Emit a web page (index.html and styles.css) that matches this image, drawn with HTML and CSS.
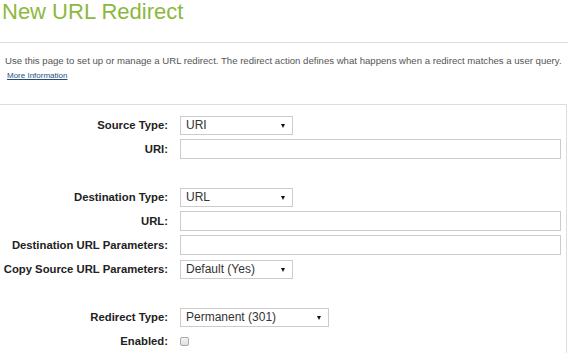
FILE: index.html
```html
<!DOCTYPE html>
<html lang="en">
<head>
<meta charset="utf-8">
<title>New URL Redirect</title>
<link rel="stylesheet" href="styles.css">
</head>
<body>
<h1 class="page-title">New URL Redirect</h1>
<hr class="rule">
<div class="intro">
  <p class="intro-text">Use this page to set up or manage a URL redirect. The redirect action defines what happens when a redirect matches a user query.</p>
  <a class="more-link" href="#">More Information</a>
</div>
<div class="form-box">
  <div class="form-grid">
    <label class="lbl">Source Type:</label>
    <div class="field"><span class="sel sel-short"><select><option>URI</option></select></span></div>

    <label class="lbl">URI:</label>
    <div class="field"><input class="txt" type="text"></div>

    <div class="spacer"></div>

    <label class="lbl">Destination Type:</label>
    <div class="field"><span class="sel sel-short"><select><option>URL</option></select></span></div>

    <label class="lbl">URL:</label>
    <div class="field"><input class="txt" type="text"></div>

    <label class="lbl">Destination URL Parameters:</label>
    <div class="field"><input class="txt" type="text"></div>

    <label class="lbl">Copy Source URL Parameters:</label>
    <div class="field"><span class="sel sel-short"><select><option>Default (Yes)</option></select></span></div>

    <div class="spacer"></div>

    <label class="lbl">Redirect Type:</label>
    <div class="field"><span class="sel sel-long"><select><option>Permanent (301)</option></select></span></div>

    <label class="lbl">Enabled:</label>
    <div class="field"><input class="chk" type="checkbox"></div>
  </div>
</div>
</body>
</html>
```

FILE: styles.css
```css
html, body {
  margin: 0;
  padding: 0;
  background: #ffffff;
  font-family: "Liberation Sans", Arial, sans-serif;
  overflow: hidden;
}

.page-title {
  margin: 0;
  padding-left: 2px;
  font-size: 22px;
  line-height: 24px;
  font-weight: normal;
  color: #8cb83e;
}

.rule {
  margin: 18px 0 0 0;
  border: 0;
  border-top: 1px solid #dddddd;
  height: 0;
}

.intro {
  padding: 12px 5px 0 5px;
}

.intro-text {
  margin: 0;
  font-size: 9.6px;
  line-height: 12px;
  color: #555555;
  white-space: nowrap;
}

.more-link {
  display: block;
  margin: 4px 0 0 2px;
  font-size: 8px;
  line-height: 10px;
  color: #1f4d7a;
  text-decoration: underline;
}

.form-box {
  margin-top: 23px;
  border-top: 1px solid #dddddd;
  border-right: 1px solid #dddddd;
  padding: 8px 5px 0 0;
  box-sizing: border-box;
  width: 567px;
}

.form-grid {
  display: grid;
  grid-template-columns: 168px 1fr;
  column-gap: 12px;
  grid-auto-rows: 24px;
  align-items: center;
}

.spacer {
  grid-column: 1 / 3;
}

.lbl {
  text-align: right;
  font-size: 11.3px;
  font-weight: bold;
  color: #222222;
  white-space: nowrap;
}

.field {
  display: flex;
  align-items: center;
}

.txt {
  display: block;
  width: 100%;
  height: 20px;
  box-sizing: border-box;
  border: 1px solid #cccccc;
  background: #ffffff;
  margin: 0;
  padding: 0 4px;
}

.sel {
  position: relative;
  display: inline-block;
  height: 19px;
}

.sel-short { width: 113px; }
.sel-long { width: 149px; }

.sel select {
  appearance: none;
  -webkit-appearance: none;
  display: block;
  width: 100%;
  height: 19px;
  box-sizing: border-box;
  border: 1px solid #cccccc;
  border-radius: 0;
  background: #ffffff;
  margin: 0;
  padding: 0 0 0 5px;
  font-family: "Liberation Sans", Arial, sans-serif;
  font-size: 12px;
  line-height: 17px;
  color: #333333;
}

.sel::after {
  content: "";
  position: absolute;
  right: 8px;
  top: 8px;
  width: 0;
  height: 0;
  border-left: 2.5px solid transparent;
  border-right: 2.5px solid transparent;
  border-top: 4px solid #111111;
  pointer-events: none;
}

.chk {
  appearance: none;
  -webkit-appearance: none;
  width: 9px;
  height: 9px;
  margin: 0;
  border: 1px solid #a9a9a9;
  border-radius: 2px;
  background: linear-gradient(#f4f4f4, #dedede);
}
```
